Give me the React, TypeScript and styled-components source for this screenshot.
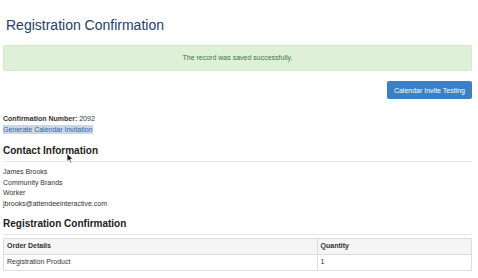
import React from "react";
import styled, { createGlobalStyle } from "styled-components";

const GlobalStyle = createGlobalStyle`
  body {
    margin: 0;
    background: #ffffff;
    font-family: "Liberation Sans", Arial, sans-serif;
    color: #333333;
  }
`;

const Page = styled.div`
  position: relative;
  padding: 0 6px 0 3px;
  font-size: 7px;
  line-height: 10.5px;
`;

const Title = styled.h1`
  margin: 17px 0 0 3px;
  font-size: 14px;
  line-height: 16px;
  font-weight: 400;
  color: #243d6d;
`;

const Alert = styled.div`
  margin-top: 12px;
  height: 26px;
  display: flex;
  align-items: center;
  justify-content: center;
  background: #dff0d8;
  border: 1px solid #d6e9c6;
  border-radius: 2px;
  box-sizing: border-box;
  color: #3c763d;
`;

const Toolbar = styled.div`
  display: flex;
  justify-content: flex-end;
  margin-top: 10px;
`;

const Button = styled.button`
  height: 18px;
  padding: 0 7px;
  border: none;
  border-radius: 2px;
  background: #3a80c6;
  color: #ffffff;
  font-family: inherit;
  font-size: 7px;
`;

const Details = styled.div`
  margin-top: 15px;
`;

const Label = styled.span`
  font-weight: 700;
`;

const Link = styled.a`
  color: #2e67ad;
  text-decoration: none;
  background: #cdd7e4;
  padding: 1px 0;
`;

const Heading = styled.h2<{ $top: number }>`
  margin: ${(p) => p.$top}px 0 0;
  padding-bottom: 4px;
  border-bottom: 1px solid #e8e8e8;
  font-size: 10px;
  line-height: 12px;
  font-weight: 700;
  color: #222222;
`;

const Lines = styled.div`
  margin-top: 5px;
`;

const Table = styled.table`
  margin-top: 3px;
  width: 100%;
  border-collapse: collapse;
  border: 1px solid #dddddd;
`;

const HeadCell = styled.th<{ $width?: string }>`
  width: ${(p) => p.$width || "auto"};
  height: 16px;
  padding: 0 3px;
  text-align: left;
  font-weight: 700;
  background: #f5f5f5;
  border: 1px solid #dddddd;
  box-sizing: border-box;
`;

const Cell = styled.td`
  height: 16px;
  padding: 0 3px;
  border: 1px solid #dddddd;
  box-sizing: border-box;
`;

const Cursor = styled.svg`
  position: absolute;
  left: 66px;
  top: 136px;
`;

const App = () => (
  <>
    <GlobalStyle />
    <Page>
      <Title>Registration Confirmation</Title>
      <Alert>The record was saved successfully.</Alert>
      <Toolbar>
        <Button>Calendar Invite Testing</Button>
      </Toolbar>
      <Details>
        <div>
          <Label>Confirmation Number:</Label> 2092
        </div>
        <div>
          <Link href="#">Generate Calendar Invitation</Link>
        </div>
      </Details>
      <Heading $top={10}>Contact Information</Heading>
      <Lines>
        <div>James Brooks</div>
        <div>Community Brands</div>
        <div>Worker</div>
        <div>jbrooks@attendeeinteractive.com</div>
      </Lines>
      <Heading $top={9}>Registration Confirmation</Heading>
      <Table>
        <thead>
          <tr>
            <HeadCell $width="67%">Order Details</HeadCell>
            <HeadCell>Quantity</HeadCell>
          </tr>
        </thead>
        <tbody>
          <tr>
            <Cell>Registration Product</Cell>
            <Cell>1</Cell>
          </tr>
        </tbody>
      </Table>
      <Cursor width="8" height="11" viewBox="0 0 8 11">
        <path d="M1 0.5 L1 8.5 L3 6.7 L4.4 10 L5.6 9.5 L4.3 6.3 L7 6.3 Z" fill="#111" stroke="#fff" strokeWidth="0.8" />
      </Cursor>
    </Page>
  </>
);

export default App;
